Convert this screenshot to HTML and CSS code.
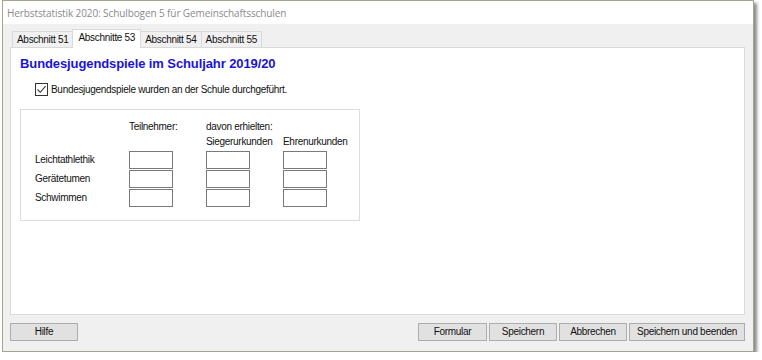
FILE: index.html
```html
<!DOCTYPE html>
<html lang="de">
<head>
<meta charset="utf-8">
<title>Herbststatistik 2020</title>
<link rel="stylesheet" href="styles.css">
</head>
<body>
<div class="window">
  <div class="titlebar">Herbststatistik 2020: Schulbogen 5 für Gemeinschaftsschulen</div>
  <div class="client">
    <div class="tabs">
      <div class="tab">Abschnitt 51</div>
      <div class="tab active">Abschnitte 53</div>
      <div class="tab">Abschnitt 54</div>
      <div class="tab">Abschnitt 55</div>
    </div>
    <div class="panel">
      <h1 class="heading">Bundesjugendspiele im Schuljahr 2019/20</h1>
      <label class="check">
        <span class="box"><svg width="11" height="11" viewBox="0 0 11 11"><path d="M1.5 5.5 L4.2 8.3 L9.6 2.2" fill="none" stroke="#333" stroke-width="1.1"/></svg></span>
        <span>Bundesjugendspiele wurden an der Schule durchgeführt.</span>
      </label>
      <div class="group">
        <div class="grid">
          <div></div>
          <div class="hd">Teilnehmer:</div>
          <div class="hd span2">davon erhielten:</div>
          <div></div>
          <div></div>
          <div class="hd">Siegerurkunden</div>
          <div class="hd">Ehrenurkunden</div>
          <div class="lbl">Leichtathlethik</div>
          <div class="field"></div><div class="field"></div><div class="field"></div>
          <div class="lbl">Gerätetumen</div>
          <div class="field"></div><div class="field"></div><div class="field"></div>
          <div class="lbl">Schwimmen</div>
          <div class="field"></div><div class="field"></div><div class="field"></div>
        </div>
      </div>
    </div>
    <div class="buttons">
      <div class="btn w68">Hilfe</div>
      <div class="spacer"></div>
      <div class="btn w69">Formular</div>
      <div class="btn w68">Speichern</div>
      <div class="btn w68">Abbrechen</div>
      <div class="btn w116">Speichern und beenden</div>
    </div>
  </div>
</div>
</body>
</html>
```
FILE: styles.css
```css
html, body { margin: 0; padding: 0; background: #ffffff; }
body { font-family: "Liberation Sans", Arial, sans-serif; font-size: 10px; color: #111; }

.window {
  margin-left: 2px;
  width: 752px;
  height: 352px;
  box-sizing: border-box;
  border: 1px solid #a4a491;
  box-shadow: 3px 3px 3px rgba(0,0,0,0.45);
  display: flex;
  flex-direction: column;
  background: #f0f0f0;
}
.titlebar {
  height: 23px;
  background: #fff;
  color: #8a8a8a;
  font-family: "Open Sans", "Noto Sans", sans-serif;
  font-size: 10px;
  letter-spacing: -0.1px;
  line-height: 25px;
  padding-left: 4px;
  white-space: nowrap;
}
.client {
  flex: 1;
  display: flex;
  flex-direction: column;
  padding: 6px 8px 0 7px;
}
.tabs {
  display: flex;
  align-items: flex-end;
  padding-left: 2px;
  height: 17px;
}
.tab {
  height: 15px;
  line-height: 15px;
  padding: 0 4px;
  border: 1px solid #d9d9d9;
  border-bottom: none;
  margin-right: -1px;
  background: #f0f0f0;
  white-space: nowrap;
  letter-spacing: -0.3px;
}
.tab.active {
  height: 18px;
  line-height: 15px;
  background: #fff;
  position: relative;
  z-index: 1;
  margin-bottom: -1px;
  padding: 0 5px;
}
.panel {
  height: 268px;
  background: #fff;
  border: 1px solid #d9d9d9;
  padding: 8px 0 0 9px;
  box-sizing: border-box;
}
.heading {
  margin: 0;
  font-size: 13px;
  font-weight: bold;
  color: #1a14d4;
  line-height: 16px;
  letter-spacing: -0.1px;
}
.check {
  display: flex;
  align-items: center;
  margin: 10px 0 0 15px;
  height: 14px;
  letter-spacing: -0.3px;
}
.box {
  width: 11px;
  height: 11px;
  border: 1px solid #333;
  margin-right: 3px;
  display: flex;
  background: #fff;
}
.group {
  margin-top: 13px;
  width: 340px;
  height: 112px;
  box-sizing: border-box;
  border: 1px solid #dcdcdc;
  padding: 10px 0 0 14px;
}
.grid {
  display: grid;
  grid-template-columns: 94px 77px 77px 77px;
  grid-template-rows: 15px 15px 19px 19px 19px;
  align-items: center;
  letter-spacing: -0.3px;
}
.hd { white-space: nowrap; align-self: start; padding-top: 1px; }
.span2 { grid-column: span 2; }
.lbl { white-space: nowrap; align-self: end; padding-bottom: 4px; }
.field {
  width: 44px;
  height: 18px;
  box-sizing: border-box;
  border: 1px solid #7a7a7a;
  background: #fff;
  align-self: end;
}
.buttons {
  display: flex;
  gap: 2px;
  margin-top: 8px;
  padding-left: 0;
}
.spacer { flex: 1; }
.btn {
  height: 18px;
  box-sizing: border-box;
  border: 1px solid #adadad;
  background: #e1e1e1;
  text-align: center;
  line-height: 16px;
  letter-spacing: -0.3px;
  white-space: nowrap;
}
.w68 { width: 68px; }
.w69 { width: 69px; }
.w116 { width: 116px; }
```
